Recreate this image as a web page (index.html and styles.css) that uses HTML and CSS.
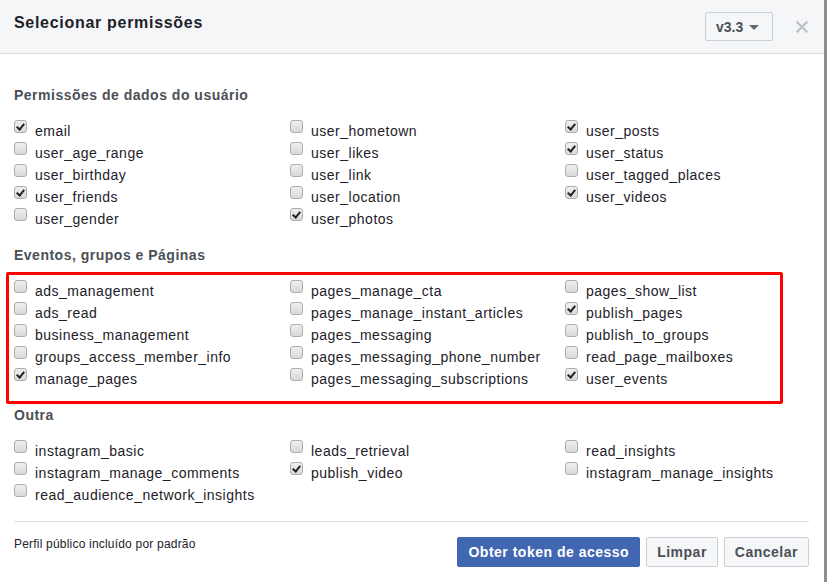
FILE: index.html
```html
<!DOCTYPE html>
<html lang="pt">
<head>
<meta charset="utf-8">
<title>Selecionar permissões</title>
<link rel="stylesheet" href="styles.css">
</head>
<body>
<div class="modal">
  <div class="header">
    <h1 class="title">Selecionar permissões</h1>
    <div class="version">v3.3<span class="caret"></span></div>
    <svg class="close" width="12" height="12" viewBox="0 0 12 12"><path d="M1.5 1.5 L10.5 10.5 M10.5 1.5 L1.5 10.5" stroke="#bec2c9" stroke-width="2.4" stroke-linecap="square"/></svg>
  </div>
  <div class="content">
    <section class="section">
      <h2 class="section-title">Permissões de dados do usuário</h2>
      <div class="grid">
        <label class="item"><span class="cb on"></span>email</label>
        <label class="item"><span class="cb"></span>user_hometown</label>
        <label class="item"><span class="cb on"></span>user_posts</label>
        <label class="item"><span class="cb"></span>user_age_range</label>
        <label class="item"><span class="cb"></span>user_likes</label>
        <label class="item"><span class="cb on"></span>user_status</label>
        <label class="item"><span class="cb"></span>user_birthday</label>
        <label class="item"><span class="cb"></span>user_link</label>
        <label class="item"><span class="cb"></span>user_tagged_places</label>
        <label class="item"><span class="cb on"></span>user_friends</label>
        <label class="item"><span class="cb"></span>user_location</label>
        <label class="item"><span class="cb on"></span>user_videos</label>
        <label class="item"><span class="cb"></span>user_gender</label>
        <label class="item"><span class="cb on"></span>user_photos</label>
      </div>
    </section>
    <section class="section">
      <h2 class="section-title">Eventos, grupos e Páginas</h2>
      <div class="grid highlight">
        <label class="item"><span class="cb"></span>ads_management</label>
        <label class="item"><span class="cb"></span>pages_manage_cta</label>
        <label class="item"><span class="cb"></span>pages_show_list</label>
        <label class="item"><span class="cb"></span>ads_read</label>
        <label class="item"><span class="cb"></span>pages_manage_instant_articles</label>
        <label class="item"><span class="cb on"></span>publish_pages</label>
        <label class="item"><span class="cb"></span>business_management</label>
        <label class="item"><span class="cb"></span>pages_messaging</label>
        <label class="item"><span class="cb"></span>publish_to_groups</label>
        <label class="item"><span class="cb"></span>groups_access_member_info</label>
        <label class="item"><span class="cb"></span>pages_messaging_phone_number</label>
        <label class="item"><span class="cb"></span>read_page_mailboxes</label>
        <label class="item"><span class="cb on"></span>manage_pages</label>
        <label class="item"><span class="cb"></span>pages_messaging_subscriptions</label>
        <label class="item"><span class="cb on"></span>user_events</label>
      </div>
    </section>
    <section class="section">
      <h2 class="section-title">Outra</h2>
      <div class="grid">
        <label class="item"><span class="cb"></span>instagram_basic</label>
        <label class="item"><span class="cb"></span>leads_retrieval</label>
        <label class="item"><span class="cb"></span>read_insights</label>
        <label class="item"><span class="cb"></span>instagram_manage_comments</label>
        <label class="item"><span class="cb on"></span>publish_video</label>
        <label class="item"><span class="cb"></span>instagram_manage_insights</label>
        <label class="item"><span class="cb"></span>read_audience_network_insights</label>
      </div>
    </section>
  </div>
  <div class="footer">
    <div class="note">Perfil público incluído por padrão</div>
    <div class="buttons">
      <button class="btn primary">Obter token de acesso</button>
      <button class="btn">Limpar</button>
      <button class="btn">Cancelar</button>
    </div>
  </div>
</div>
</body>
</html>
```
FILE: styles.css
```css
* { box-sizing: border-box; }
html, body { margin: 0; padding: 0; }
body {
  background: #8e8e8e;
  font-family: "Liberation Sans", Arial, Helvetica, sans-serif;
  width: 827px;
  height: 582px;
  overflow: hidden;
}
.modal {
  width: 824px;
  height: 582px;
  background: #fff;
  display: flex;
  flex-direction: column;
}
.header {
  height: 54px;
  background: #f5f6f7;
  border-bottom: 1px solid #dddfe2;
  display: flex;
  align-items: flex-start;
  padding: 12px 16px 0 14px;
}
.title {
  margin: 1px 0 0 0;
  font-size: 16px;
  line-height: 19px;
  font-weight: bold;
  letter-spacing: 0.7px;
  color: #1d2129;
  flex: 1;
}
.version {
  width: 68px;
  height: 29px;
  border: 1px solid #ccd0d5;
  border-radius: 2px;
  background: #f5f6f7;
  color: #4b4f56;
  font-size: 14px;
  font-weight: bold;
  display: flex;
  align-items: center;
  padding-left: 10px;
}
.caret {
  width: 0;
  height: 0;
  border-left: 5px solid transparent;
  border-right: 5px solid transparent;
  border-top: 5px solid #606770;
  margin-left: 6px;
  margin-top: 1px;
}
.close {
  margin-left: 23px;
  margin-top: 9px;
  display: block;
}
.content {
  padding: 32px 0 0 14px;
}
.section + .section { margin-top: 16px; }
.section-title {
  margin: 0 0 16px 0;
  font-size: 14px;
  line-height: 18px;
  font-weight: bold;
  letter-spacing: 0.5px;
  color: #4b4f56;
}
.grid {
  display: grid;
  grid-template-columns: 276px 275px 1fr;
  position: relative;
}
.highlight::after {
  content: "";
  box-sizing: border-box;
  position: absolute;
  top: -8px;
  left: -8px;
  width: 777px;
  height: 132px;
  border: 3px solid #ff0000;
  border-radius: 2px;
  pointer-events: none;
}
.item {
  display: flex;
  align-items: flex-start;
  font-size: 14px;
  line-height: 22px;
  height: 22px;
  letter-spacing: 0.5px;
  color: #1d2129;
  white-space: nowrap;
}
.cb {
  width: 13px;
  height: 13px;
  margin-top: 0;
  margin-right: 8px;
  border: 1px solid #adadad;
  border-radius: 3px;
  background: linear-gradient(#efefef, #d9d9d9);
  flex: none;
  position: relative;
}
.cb.on::after {
  content: "";
  position: absolute;
  left: 3px;
  top: 1px;
  width: 3px;
  height: 6px;
  border-right: 2px solid #222;
  border-bottom: 2px solid #222;
  transform: rotate(40deg);
}
.footer {
  margin: 15px 15px 0 14px;
  border-top: 1px solid #dddfe2;
  padding-top: 15px;
  display: flex;
  justify-content: space-between;
  align-items: flex-start;
}
.note {
  font-size: 12px;
  line-height: 14px;
  letter-spacing: 0.2px;
  color: #1d2129;
}
.buttons {
  display: flex;
  gap: 6px;
}
.btn {
  font-family: "Liberation Sans", Arial, Helvetica, sans-serif;
  height: 30px;
  padding: 0 10px;
  font-size: 14px;
  font-weight: bold;
  letter-spacing: 0.5px;
  border: 1px solid #ccd0d5;
  border-radius: 2px;
  background: #f5f6f7;
  color: #4b4f56;
}
.btn.primary {
  background: #4267b2;
  border-color: #4267b2;
  color: #fff;
}
```
